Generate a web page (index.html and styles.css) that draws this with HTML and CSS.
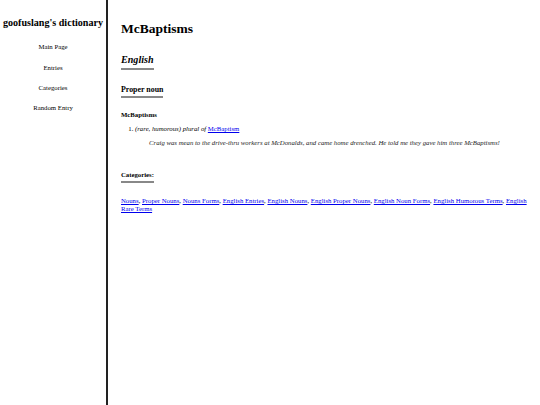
FILE: index.html
```html
<!DOCTYPE html>
<html>
<head>
<meta charset="utf-8">
<link rel="stylesheet" href="styles.css">
</head>
<body>
<div class="layout">
  <aside class="sidebar">
    <div class="site-title">goofuslang's dictionary</div>
    <nav class="nav">
      <a href="#">Main Page</a>
      <a href="#">Entries</a>
      <a href="#">Categories</a>
      <a href="#">Random Entry</a>
    </nav>
  </aside>
  <main class="content">
    <h1 class="title">McBaptisms</h1>
    <h2 class="lang">English</h2>
    <h3 class="pos">Proper noun</h3>
    <h4 class="headword">McBaptisms</h4>
    <ol class="senses">
      <li><i>(rare, humorous) plural of</i> <a href="#">McBaptism</a></li>
    </ol>
    <div class="example">Craig was mean to the drive-thru workers at McDonalds, and came home drenched. He told me they gave him three McBaptisms!</div>
    <h4 class="cats-title">Categories:</h4>
    <div class="cats"><a href="#">Nouns</a>, <a href="#">Proper Nouns</a>, <a href="#">Nouns Forms</a>, <a href="#">English Entries</a>, <a href="#">English Nouns</a>, <a href="#">English Proper Nouns</a>, <a href="#">English Noun Forms</a>, <a href="#">English Humorous Terms</a>, <a href="#">English Rare Terms</a></div>
  </main>
</div>
</body>
</html>
```
FILE: styles.css
```css
html, body {
  margin: 0;
  padding: 0;
  background: #fff;
}
body {
  font-family: "Liberation Serif", "Times New Roman", serif;
  font-size: 6.75px;
  line-height: 1.2;
  color: #000;
}
.layout {
  display: flex;
  min-height: 405px;
}
.sidebar {
  width: 108px;
  flex: none;
  border-right: 2px solid #222;
  text-align: center;
  padding-top: 17px;
  box-sizing: border-box;
}
.site-title {
  font-size: 10.1px;
  font-weight: bold;
  white-space: nowrap;
}
.nav {
  display: flex;
  flex-direction: column;
  gap: 12.3px;
  margin-top: 14px;
}
.nav a {
  color: #000;
  text-decoration: none;
}
.content {
  flex: 1;
  padding: 21px 12px 0 13px;
}
.title {
  font-size: 13.5px;
  line-height: 1.15;
  margin: 0;
}
.lang {
  font-size: 10.1px;
  line-height: 1.15;
  font-style: italic;
  margin: 17.4px 0 0;
  width: fit-content;
  padding-bottom: 2px;
  border-bottom: 2px solid #888;
}
.pos {
  font-size: 7.9px;
  line-height: 1.15;
  margin: 15.7px 0 0;
  width: fit-content;
  padding-bottom: 1.5px;
  border-bottom: 2px solid #888;
}
.headword {
  font-size: 6.75px;
  margin: 13.7px 0 0;
}
.senses {
  margin: 5.9px 0 0;
  padding-left: 14px;
}
.senses a {
  color: #0000ee;
}
.example {
  margin: 5.9px 0 0 28px;
  font-style: italic;
  color: #222;
}
.cats-title {
  font-size: 6.75px;
  margin: 23.5px 0 0;
  width: fit-content;
  padding-bottom: 2px;
  border-bottom: 2px solid #888;
}
.cats {
  margin-top: 14px;
}
.cats a {
  color: #0000ee;
}
```
